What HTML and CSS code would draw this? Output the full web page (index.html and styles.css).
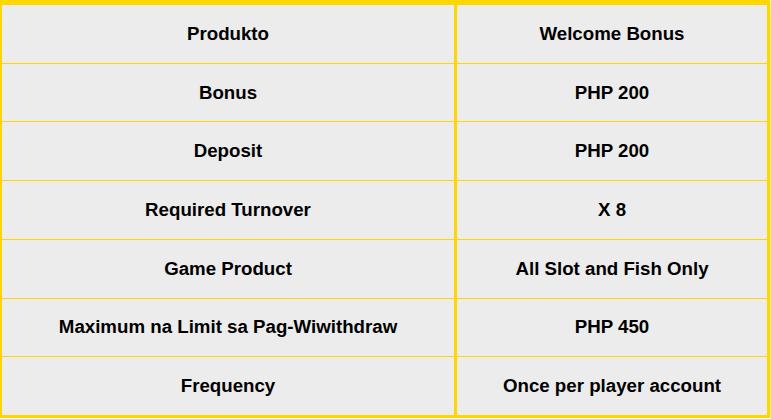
FILE: index.html
```html
<!DOCTYPE html>
<html>
<head>
<meta charset="utf-8">
<link rel="stylesheet" href="styles.css">
</head>
<body>
<div class="table">
  <div class="cell">Produkto</div><div class="cell">Welcome Bonus</div>
  <div class="cell">Bonus</div><div class="cell">PHP 200</div>
  <div class="cell">Deposit</div><div class="cell">PHP 200</div>
  <div class="cell">Required Turnover</div><div class="cell">X 8</div>
  <div class="cell">Game Product</div><div class="cell">All Slot and Fish Only</div>
  <div class="cell">Maximum na Limit sa Pag-Wiwithdraw</div><div class="cell">PHP 450</div>
  <div class="cell">Frequency</div><div class="cell">Once per player account</div>
</div>
</body>
</html>
```
FILE: styles.css
```css
html, body {
  margin: 0;
  padding: 0;
  background: #ffffff;
}
.table {
  display: grid;
  grid-template-columns: 452px 310px;
  grid-template-rows: repeat(7, 1fr);
  column-gap: 3px;
  row-gap: 1px;
  width: 765px;
  height: 410px;
  background: #FFD700;
  border-style: solid;
  border-color: #FFD700;
  border-width: 5px 3px 3px 2px;
  box-shadow: 1px 1px 0 #fbeca0;
  font-family: "Liberation Sans", Arial, sans-serif;
  font-weight: bold;
  font-size: 18.7px;
  color: #000;
}
.cell {
  background: #ECECEC;
  display: flex;
  align-items: center;
  justify-content: center;
  text-align: center;
}
```
